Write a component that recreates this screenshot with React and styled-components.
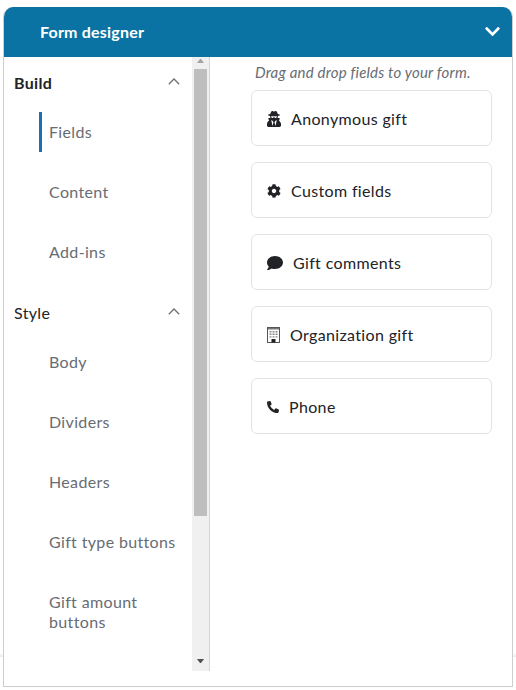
import React from 'react';
import styled, { createGlobalStyle } from 'styled-components';
import { FaChevronDown, FaCog, FaComment, FaPhoneAlt, FaUserSecret } from 'react-icons/fa';

const BuildingIcon = () => (
  <svg width="13" height="16" viewBox="0 0 13 16" aria-hidden="true">
    <rect x="0.5" y="0.5" width="12" height="15" fill="#fff" stroke="#555" />
    <rect x="1" y="1" width="11" height="1.5" fill="#777" />
    <path
      d="M2.5 4h2v1.4h-2zM5.5 4h2v1.4h-2zM8.5 4h2v1.4h-2zM2.5 6.6h2V8h-2zM5.5 6.6h2V8h-2zM8.5 6.6h2V8h-2zM2.5 9.2h2v1.4h-2zM5.5 9.2h2v1.4h-2zM8.5 9.2h2v1.4h-2z"
      fill="#8a8a8a"
    />
    <rect x="4.5" y="12" width="4" height="3.5" fill="#222" />
  </svg>
);

const sections = [
  { title: 'Build', bold: true, items: ['Fields', 'Content', 'Add-ins'] },
  { title: 'Style', items: ['Body', 'Dividers', 'Headers', 'Gift type buttons', 'Gift amount buttons'] },
];

const App = () => {
  const fields = [
    { label: 'Anonymous gift', icon: <SSecretIcon /> },
    { label: 'Custom fields', icon: <FaCog size={14} /> },
    { label: 'Gift comments', icon: <FaComment size={16} /> },
    { label: 'Organization gift', icon: <BuildingIcon /> },
    { label: 'Phone', icon: <FaPhoneAlt size={12} /> },
  ];

  return (
    <>
      <GlobalStyle />
      <SBackdrop />
      <SPage>
        <SPanel>
          <SHeader>
            <STitle>Form designer</STitle>
            <FaChevronDown size={17} />
          </SHeader>
          <SBody>
            <SSidebar>
              <SNav>
                {sections.map((section) => (
                  <SSection key={section.title}>
                    <SSectionHead $bold={section.bold}>
                      {section.title}
                      <svg width="12" height="7" viewBox="0 0 12 7" aria-hidden="true">
                        <path d="M0.8 6.2 6 1l5.2 5.2" fill="none" stroke="#6d7075" strokeWidth="1.3" />
                      </svg>
                    </SSectionHead>
                    {section.items.map((item) => (
                      <SNavItem key={item} $active={item === 'Fields'}>
                        {item}
                      </SNavItem>
                    ))}
                  </SSection>
                ))}
              </SNav>
              <SScrollbar>
                <SArrow $up />
                <SThumb />
                <STrack />
                <SArrow />
              </SScrollbar>
            </SSidebar>
            <SContent>
              <SHint>Drag and drop fields to your form.</SHint>
              <SFieldList>
                {fields.map((field) => (
                  <SField key={field.label}>
                    {field.icon}
                    {field.label}
                  </SField>
                ))}
              </SFieldList>
            </SContent>
          </SBody>
        </SPanel>
      </SPage>
    </>
  );
};

const GlobalStyle = createGlobalStyle`
  * {
    box-sizing: border-box;
  }

  html,
  body {
    margin: 0;
    height: 100%;
    background: #fff;
    overflow: hidden;
    font-family: "Lato", "Liberation Sans", sans-serif;
  }
`;

const SBackdrop = styled.div`
  position: absolute;
  top: 653px;
  left: 0;
  width: 100%;
  height: 4px;
  background: linear-gradient(#fff, #e9e9e9);
`;

const SPage = styled.div`
  position: relative;
  padding: 7px 3px 3px;
`;

const SPanel = styled.div`
  display: flex;
  flex-direction: column;
  height: 680px;
  background: #fff;
  border: 1px solid #cdcdcd;
  border-top: 0;
  border-radius: 10px 10px 0 0;
  overflow: hidden;
`;

const SHeader = styled.div`
  display: flex;
  flex: 0 0 50px;
  justify-content: space-between;
  align-items: center;
  margin: 0 -1px;
  padding: 0 12px 2px 37px;
  background: #0a73a3;
  color: #fff;
`;

const STitle = styled.span`
  font-size: 16px;
  font-weight: 700;
  letter-spacing: 0.2px;
`;

const SBody = styled.div`
  display: flex;
  flex: 1;
  min-height: 0;
`;

const SSidebar = styled.div`
  display: flex;
  flex: 0 0 206px;
  height: 614px;
  border-right: 1px solid #d4d4d4;
`;

const SNav = styled.nav`
  flex: 1;
  padding-top: 5px;
  overflow: hidden;
`;

const SSection = styled.section`
  display: flex;
  flex-direction: column;
  margin-bottom: 10px;
`;

const SSectionHead = styled.div`
  display: flex;
  justify-content: space-between;
  align-items: center;
  height: 40px;
  padding: 0 12px 0 10px;
  color: #212327;
  font-size: 16px;
  letter-spacing: 0.35px;
  font-weight: ${({ $bold }) => ($bold ? 700 : 400)};

  svg {
    position: relative;
    top: -1px;
  }
`;

const SNavItem = styled.div`
  width: 140px;
  margin: 10px 0 10px 35px;
  padding: 10px 0 10px ${({ $active }) => ($active ? '7px' : '10px')};
  border-left: ${({ $active }) => ($active ? '3px solid #1a6fb5' : '0')};
  color: #686c73;
  font-size: 16px;
  letter-spacing: 0.35px;
  line-height: 20px;
`;

const SScrollbar = styled.div`
  display: flex;
  flex: 0 0 17px;
  flex-direction: column;
  align-items: center;
  background: #f0f0f0;
`;

const SArrow = styled.div`
  flex: none;
  width: 7px;
  height: 4px;
  margin: ${({ $up }) => ($up ? '2px 0 0' : '0 0 8px')};
  border-left: 3.5px solid transparent;
  border-right: 3.5px solid transparent;
  border-top: ${({ $up }) => ($up ? '0' : '4px solid #505050')};
  border-bottom: ${({ $up }) => ($up ? '4px solid #a3a3a3' : '0')};
`;

const SThumb = styled.div`
  flex: 0 0 447px;
  width: 13px;
  margin-top: 6px;
  background: #bebebe;
`;

const STrack = styled.div`
  flex: 1;
`;

const SContent = styled.div`
  flex: 1;
  padding: 5px 20px 0 41px;
`;

const SHint = styled.div`
  margin-bottom: 8px;
  padding-left: 4px;
  color: #686c73;
  font-size: 15px;
  font-style: italic;
  letter-spacing: 0.2px;
  line-height: 20px;
`;

const SFieldList = styled.div`
  display: flex;
  flex-direction: column;
  gap: 16px;
`;

const SField = styled.div`
  display: flex;
  align-items: center;
  gap: 10px;
  height: 56px;
  padding-left: 15px;
  border: 1px solid #e2e3e4;
  border-radius: 6px;
  color: #212327;
  font-size: 16px;
  letter-spacing: 0.35px;

  svg {
    flex: none;
    margin-top: 2px;
  }
`;

const SSecretIcon = styled(FaUserSecret)`
  width: 14px;
  height: 16px;
`;

export default App;
